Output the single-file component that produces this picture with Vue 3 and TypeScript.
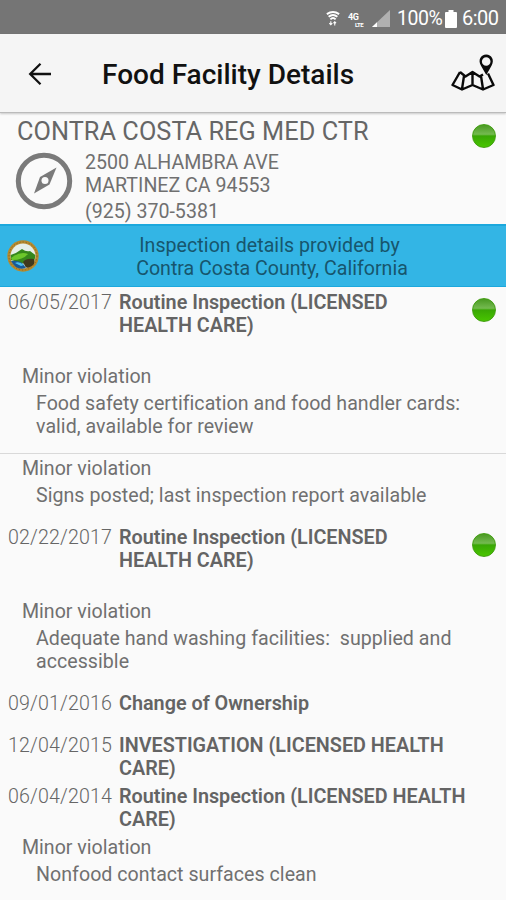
<script setup lang="ts">
interface Violation {
  kind: string
  lines: string[]
  divided?: boolean
}
interface Inspection {
  date: string
  title: string[]
  passed?: boolean
  size: 'spacious' | 'single' | 'compact'
  violations: Violation[]
}

const inspections: Inspection[] = [
  {
    date: '06/05/2017',
    title: ['Routine Inspection (LICENSED', 'HEALTH CARE)'],
    passed: true,
    size: 'spacious',
    violations: [
      {
        kind: 'Minor violation',
        lines: ['Food safety certification and food handler cards:', 'valid, available for review'],
      },
      { kind: 'Minor violation', lines: ['Signs posted; last inspection report available'], divided: true },
    ],
  },
  {
    date: '02/22/2017',
    title: ['Routine Inspection (LICENSED', 'HEALTH CARE)'],
    passed: true,
    size: 'spacious',
    violations: [
      { kind: 'Minor violation', lines: ['Adequate hand washing facilities:  supplied and', 'accessible'] },
    ],
  },
  { date: '09/01/2016', title: ['Change of Ownership'], size: 'single', violations: [] },
  { date: '12/04/2015', title: ['INVESTIGATION (LICENSED HEALTH', 'CARE)'], size: 'compact', violations: [] },
  {
    date: '06/04/2014',
    title: ['Routine Inspection (LICENSED HEALTH', 'CARE)'],
    size: 'compact',
    violations: [{ kind: 'Minor violation', lines: ['Nonfood contact surfaces clean'] }],
  },
]
</script>

<template>
  <div class="screen">
    <div class="status">
      <svg class="wifi" viewBox="0 0 16 18" fill="none" stroke="#fff">
        <path d="M1 4Q8-1 15 4M3 7Q8 3 13 7M5 10Q8 7 11 10" stroke-width="2.2" />
        <path d="M5.5 12v4M3.8 14.4 5.5 16.2 7.2 14.4M10 17v-4M8.5 14.4 10 12.8 11.5 14.4" stroke-width="1.2" />
      </svg>
      <div class="lte"><span class="gen">4G</span><span class="sub">LTE</span></div>
      <svg class="signal" viewBox="0 0 18 17">
        <path d="M18 0V17H0z" fill="#b0b0b0" />
        <path d="M5 12.3V17H0z" fill="#fff" />
      </svg>
      <span class="pct">100%</span>
      <svg class="battery" viewBox="0 0 12 18"><path d="M3.5 0h5v2H11q1 0 1 1v14q0 1-1 1H1q-1 0-1-1V3q0-1 1-1h2.5z" fill="#fff" /></svg>
      <span class="time">6:00</span>
    </div>

    <header class="bar">
      <svg class="back" viewBox="0 0 24 24" fill="none" stroke="#111" stroke-width="2.3">
        <path d="M23 12H2M12.5 1.8 2.2 12l10.3 10.2" />
      </svg>
      <h1>Food Facility Details</h1>
      <svg class="map" viewBox="0 0 44 38" fill="none" stroke="#0a0a0a" stroke-width="2.4" stroke-linejoin="round">
        <path d="M9 18 1.5 31 11 35.5 21.5 31 32 35.5 42.5 31 37 19.5M9 18l5.5 4.5L21.5 18l7 4.5 3.5-2M13 22 11 35M21.5 18v13M30 22 32 35" />
        <path fill="#0a0a0a" stroke="none" fill-rule="evenodd" d="M35.3 21 30 11.8C26.5 6 30 .6 35.2 .6S44 6 40.5 11.8zM35.2 3.2a4.3 4.3 0 1 0 0 8.6 4.3 4.3 0 0 0 0-8.6z" />
      </svg>
    </header>

    <section class="facility">
      <div class="name-row">
        <h2>CONTRA COSTA REG MED CTR</h2>
        <i class="dot"></i>
      </div>
      <div class="place">
        <svg class="compass" viewBox="0 0 58 58">
          <circle cx="29" cy="29" r="25.7" fill="none" stroke="#7a7a7a" stroke-width="5" />
          <path d="M41.5 15.5 34.5 32.5 19 41.5 25 25z" fill="#7a7a7a" />
          <circle cx="30" cy="28.5" r="3.5" fill="#fafafa" />
        </svg>
        <div class="address">
          <p class="street">2500 ALHAMBRA AVE</p>
          <p class="city">MARTINEZ CA 94553</p>
          <p class="phone">(925) 370-5381</p>
        </div>
      </div>
    </section>

    <section class="provider">
      <svg class="seal" viewBox="0 0 32 32">
        <circle cx="16" cy="16" r="15.7" fill="#b78a2e" />
        <circle cx="16" cy="16" r="14" fill="none" stroke="#8a6a24" stroke-dasharray="1.3 1.8" />
        <circle cx="16" cy="16" r="12.5" fill="#e6efe8" />
        <path d="M3.6 15Q10 13 15 9q4 3 8 2l5.3 4q0 7-5 10.5L4 20z" fill="#36871c" />
        <path d="M4 18Q13 11 21 14 16 20 5 20z" fill="#6cc72b" />
        <path d="M4 21q8-1 12 3l3 4Q9 31 4 21z" fill="#175a98" />
        <path d="M8 23q4-2 9 2l-3 1z" fill="#49bff0" />
        <path d="M16 22q3-4 11-3 2 5-4 8-4 2-5-1z" fill="#40391d" />
      </svg>
      <div class="credit">
        <p class="by">Inspection details provided by</p>
        <p class="county">Contra Costa County, California</p>
      </div>
    </section>

    <main>
      <article v-for="item in inspections" :key="item.date" :class="item.size">
        <div class="head">
          <time>{{ item.date }}</time>
          <h3>
            <span v-for="line in item.title" :key="line">{{ line }}</span>
          </h3>
          <i v-if="item.passed" class="dot"></i>
        </div>
        <div v-for="(v, i) in item.violations" :key="i" class="violation" :class="{ divided: v.divided }">
          <p class="kind">{{ v.kind }}</p>
          <div class="detail">
            <p v-for="line in v.lines" :key="line">{{ line }}</p>
          </div>
        </div>
      </article>
    </main>
  </div>
</template>

<style>
body { margin: 0; background: #fafafa; }
</style>

<style scoped>
* { box-sizing: border-box; }
.screen { width: 506px; height: 900px; overflow: hidden; background: #fafafa; color: #707070; font-family: Roboto, sans-serif; font-size: 19.6px; line-height: 23.2px; }
p, h1, h2, h3 { margin: 0; font-weight: 400; white-space: pre; }
.status { height: 34px; background: #757575; color: #fff; display: flex; align-items: center; padding: 3px 7px 0 326px; font-size: 20px; }
.wifi { width: 14px; height: 17px; flex: none; }
.lte { width: 18px; margin: 3px 0 0 8px; display: flex; flex-direction: column; font-weight: 700; flex: none; }
.gen { font-size: 9px; line-height: 9px; letter-spacing: -.5px; }
.sub { font-size: 6px; line-height: 6px; margin-left: 7px; letter-spacing: -.5px; }
.signal { width: 18px; height: 17px; margin-left: 6px; flex: none; }
.pct { margin-left: 7px; width: 44px; font-size: 19.5px; letter-spacing: -.5px; }
.battery { width: 12px; height: 18px; margin-left: 4px; flex: none; }
.time { margin-left: 5px; letter-spacing: -.5px; }
.bar { height: 79px; background: #f5f5f5; border-bottom: 1px solid #bbb; box-shadow: 0 1px 2px #0003; display: flex; align-items: center; padding: 0 11px 0 28px; position: relative; }
.back { width: 24px; height: 24px; margin-top: 1px; }
h1 { flex: 1; margin-left: 50px; padding-top: 4px; font-size: 28px; line-height: 32px; font-weight: 500; color: #111; }
.map { width: 44px; height: 38px; }
.facility { height: 111px; }
.name-row { display: flex; justify-content: space-between; align-items: center; height: 37px; padding: 0 10px 0 17px; }
h2 { font-size: 25.3px; line-height: 30px; font-weight: 370; letter-spacing: .05px; color: #666; }
.dot { display: block; width: 24px; height: 24px; border-radius: 50%; background: linear-gradient(#4a9922 0, #74ba50 42%, #39a704 50%, #48c500 100%); border: 1px solid #43a013; flex: none; }
.name-row .dot { margin-top: 9px; }
.place { display: flex; padding-left: 15px; }
.compass { width: 58px; height: 58px; margin-top: 2px; }
.address { margin-left: 12px; padding-top: 1px; }
.phone { padding-top: 3px; }
.provider { height: 63px; background: #33b5e5; border-top: 2px solid #1ca8dd; border-bottom: 1px solid #1ca8dd; display: flex; align-items: center; color: #17566d; }
.seal { width: 32px; height: 32px; margin-left: 7px; flex: none; }
.credit { flex: 1; text-align: center; padding: 2px 1px 0 0; }
.by { padding-right: 5px; letter-spacing: .05px; }
main { padding-top: 4px; }
.head { display: flex; padding: 0 10px 0 8px; }
time { width: 111px; flex: none; font-weight: 350; letter-spacing: .15px; color: #666; }
h3 { flex: 1; }
h3 span { display: block; font-weight: 650; font-size: 19.8px; color: #646464; }
.head .dot { margin-top: 7px; }
.spacious .head { height: 74px; }
.single .head { height: 42px; }
.compact .head { height: 51px; }
.spacious { padding-bottom: 19px; }
.kind { padding-left: 22px; height: 27px; line-height: 23px; }
.detail { padding-left: 36px; line-height: 23px; letter-spacing: .035px; }
.divided { margin-top: 15px; border-top: 1px solid #d9d9d9; padding-top: 3px; }
</style>
